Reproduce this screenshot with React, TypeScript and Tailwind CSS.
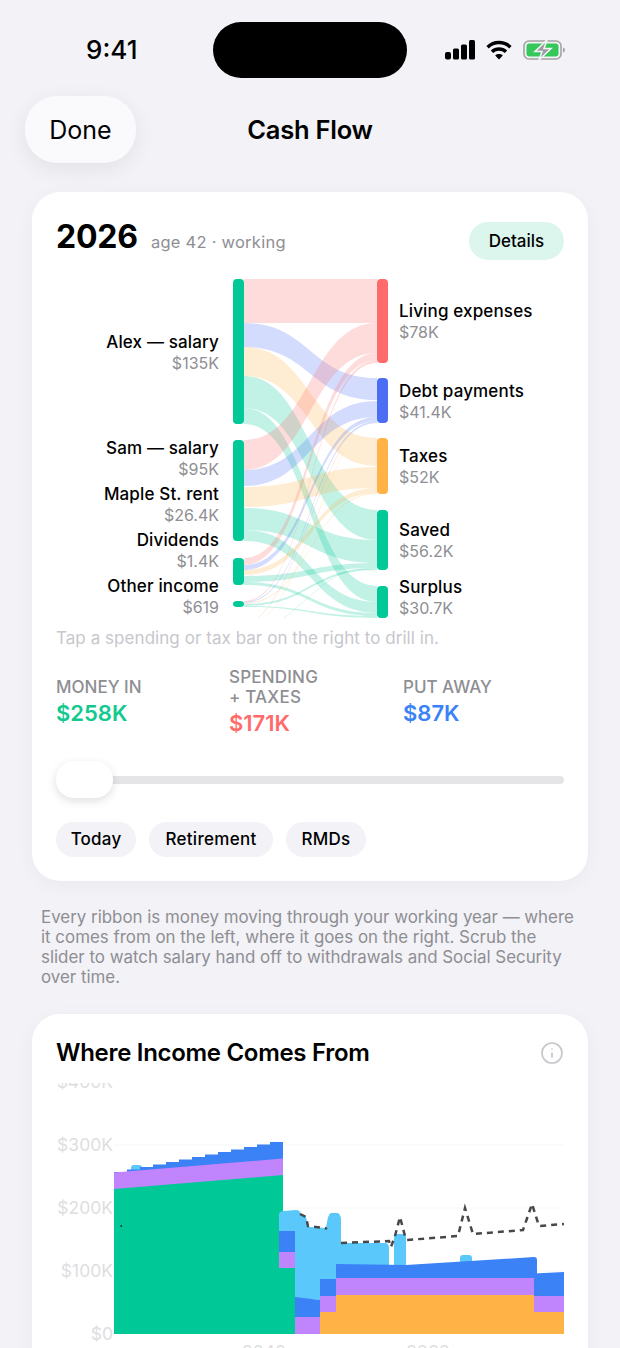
import { Info } from "lucide-react"

const PINK = "#ff6b6b"
const BLUE = "#4c6ef5"
const PEACH = "#ffb347"
const GREEN = "#00c896"

// left top, left bottom, right top, right bottom, colour
const flows: [number, number, number, number, string][] = [
  [279, 323, 279, 323, PINK],
  [323, 347, 378, 400, BLUE],
  [347, 376, 438, 466, PEACH],
  [376, 408, 510, 540, GREEN],
  [408, 424, 586, 602, GREEN],
  [440, 470, 323, 353, PINK],
  [470, 486, 401, 417, BLUE],
  [487, 507, 467, 488, PEACH],
  [508, 530, 540, 563, GREEN],
  [530, 541, 602, 613, GREEN],
  [558, 565, 353, 360, PINK],
  [565, 570, 417, 421, BLUE],
  [570, 575, 488, 493, PEACH],
  [576, 582, 563, 568, GREEN],
  [582, 585, 613, 616, GREEN],
  [601, 602, 360, 363, PINK],
  [602, 603, 421, 423, BLUE],
  [603, 604, 493, 494, PEACH],
  [604, 606, 568, 570, GREEN],
  [606, 607, 616, 618, GREEN],
]

const leftBars = [
  [279, 424],
  [440, 541],
  [558, 585],
  [601, 607],
]

const rightBars: [number, number, string][] = [
  [279, 363, PINK],
  [378, 423, BLUE],
  [438, 494, PEACH],
  [510, 570, GREEN],
  [586, 618, GREEN],
]

const leftLabels = [
  { name: "Alex — salary", value: "$135K", top: 61 },
  { name: "Sam — salary", value: "$95K", top: 167 },
  { name: "Maple St. rent", value: "$26.4K", top: 213 },
  { name: "Dividends", value: "$1.4K", top: 259 },
  { name: "Other income", value: "$619", top: 305 },
]

const rightLabels = [
  { name: "Living expenses", value: "$78K", top: 30 },
  { name: "Debt payments", value: "$41.4K", top: 110 },
  { name: "Taxes", value: "$52K", top: 175 },
  { name: "Saved", value: "$56.2K", top: 249 },
  { name: "Surplus", value: "$30.7K", top: 306 },
]

function ribbon(la: number, lb: number, ra: number, rb: number) {
  return `M244 ${la}C310 ${la} 310 ${ra} 377 ${ra}L377 ${rb}C310 ${rb} 310 ${lb} 244 ${lb}Z`
}

// the working years climb in yearly steps
function salaryTop() {
  let d = "M114 1172"
  for (let i = 0; i < 13; i++) {
    const x = 114 + i * 13
    const y = 1172 - i * 2.5
    d += `L${x} ${y}L${x + 13} ${y}`
  }
  return d + "L283 1139.500L283 1176L114 1189Z"
}

function StatusIcons() {
  return (
    <div className="flex items-center gap-[11px]">
      <svg width="30" height="20" viewBox="0 0 30 20" fill="#000">
        <rect x="0" y="12" width="6" height="7.5" rx="2" />
        <rect x="8" y="8.5" width="6" height="11" rx="1.5" />
        <rect x="16" y="4.5" width="6" height="15" rx="1.5" />
        <rect x="24" y="0" width="6" height="19.5" rx="1.5" />
      </svg>
      <svg width="26" height="20" viewBox="0 0 26 20" fill="none" stroke="#000" strokeWidth="3.4">
        <path d="M1.6 7.2C8 1 18 1 24.4 7.2" />
        <path d="M6 11.8C10 8 16 8 20 11.8" />
        <path d="M13 19.4L9.2 15.5C11.4 13.6 14.6 13.6 16.8 15.5Z" fill="#000" stroke="none" />
      </svg>
      <svg width="43" height="20" viewBox="0 0 43 20" fill="none">
        <rect x="1" y="1" width="37" height="18" rx="5" stroke="#a3a3a3" strokeWidth="1.6" />
        <rect x="3.5" y="3.5" width="32" height="13" rx="3" fill="#34c759" />
        <path d="M40 7.5C41.5 8 42 9 42 10C42 11 41.5 12 40 12.5Z" fill="#a3a3a3" />
        <path d="M24 0L12 11.5H19L16 20L28 8.500H21Z" fill="#9b9ba0" stroke="#f2f2f7" strokeWidth="1.6" />
      </svg>
    </div>
  )
}

function Sankey() {
  return (
    <div className="relative h-[350px]">
      <svg className="absolute inset-0" width="508" height="350" viewBox="56 270 508 350">
        {flows.map(([la, lb, ra, rb, color], i) => (
          <path key={i} d={ribbon(la, lb, ra, rb)} fill={color} fillOpacity={0.24} />
        ))}
        {/* faint hairlines running off the bottom of the diagram */}
        <path d="M258 618C290 590 305 520 340 450" fill="none" stroke={PINK} strokeOpacity="0.14" />
        <path d="M265 618C296 590 315 510 345 450" fill="none" stroke={PEACH} strokeOpacity="0.14" />
        <path d="M284 618C320 590 340 560 377 572" fill="none" stroke={GREEN} strokeOpacity="0.14" />
        {leftBars.map(([a, b]) => (
          <rect key={a} x="233" y={a} width="11" height={b - a} rx="4" fill={GREEN} />
        ))}
        {rightBars.map(([a, b, color]) => (
          <rect key={a} x="377" y={a} width="11" height={b - a} rx="4" fill={color} />
        ))}
      </svg>
      {leftLabels.map((l) => (
        <div key={l.name} className="absolute left-0 w-[163px] text-right" style={{ top: l.top }}>
          <div className="text-[17px] leading-[22px] tracking-[0.15px] font-medium text-black">{l.name}</div>
          <div className="text-[16px] leading-[21px] text-[#8e8e93]">{l.value}</div>
        </div>
      ))}
      {rightLabels.map((l) => (
        <div key={l.name} className="absolute left-[343px]" style={{ top: l.top }}>
          <div className="text-[17px] leading-[22px] tracking-[0.15px] font-medium text-black">{l.name}</div>
          <div className="text-[16px] leading-[21px] text-[#8e8e93]">{l.value}</div>
        </div>
      ))}
    </div>
  )
}

function IncomeChart() {
  const axis = [
    { label: "$400K", y: 1088 },
    { label: "$300K", y: 1151 },
    { label: "$200K", y: 1214 },
    { label: "$100K", y: 1277 },
    { label: "$0", y: 1340 },
  ]
  return (
    <svg className="block" width="556" height="265" viewBox="32 1083 556 265" fontFamily="Inter, sans-serif">
      {[1082, 1145, 1208, 1271].map((y) => (
        <line key={y} x1="114" x2="564" y1={y} y2={y} stroke="#f7f7f9" />
      ))}
      {axis.map((a) => (
        <text key={a.label} x="113" y={a.y} textAnchor="end" fontSize="17.5" fill="#dedee0">
          {a.label}
        </text>
      ))}
      <text x="264" y="1358" textAnchor="middle" fontSize="17.5" fill="#dedee0">2040</text>
      <text x="428" y="1358" textAnchor="middle" fontSize="17.5" fill="#dedee0">2060</text>

      {/* working years */}
      <rect x="131" y="1165" width="11" height="12" rx="3" fill="#5ac8fa" />
      <path d={salaryTop()} fill="#3b82f6" />
      <path d="M114 1172.500L283 1158.500L283 1176L114 1190Z" fill="#c084fc" />
      <path d="M114 1189L283 1175L283 1268L295 1268L295 1334L114 1334Z" fill={GREEN} />

      {/* light blue withdrawals */}
      <path d="M279 1232L279 1214Q280 1211 284 1211L296 1210Q300 1210 301 1214L306 1216Q307 1226 310 1227L326 1228Q328 1213 331 1213L338 1213Q340 1214 341 1218L341 1243L386 1243Q389 1244 389 1248L389 1266L336 1266L336 1280L320 1280L320 1300L295 1298L295 1232Z" fill="#5ac8fa" />
      <rect x="394" y="1234" width="12" height="36" rx="3" fill="#5ac8fa" />
      <rect x="460" y="1255" width="12" height="12" rx="3" fill="#5ac8fa" />

      {/* blue */}
      <rect x="279" y="1231" width="16" height="21" fill="#3b82f6" />
      <path d="M295 1297L320 1300L320 1317L295 1317Z" fill="#3b82f6" />
      <rect x="320" y="1279" width="16" height="17" fill="#3b82f6" />
      <path d="M336 1264L406 1265L534 1257Q537 1257 537 1260L537 1278L336 1278Z" fill="#3b82f6" />
      <path d="M534 1273.500L564 1272L564 1296L534 1296Z" fill="#3b82f6" />

      {/* purple */}
      <rect x="279" y="1252" width="16" height="16" fill="#c084fc" />
      <rect x="295" y="1317" width="25" height="17" fill="#c084fc" />
      <rect x="320" y="1296" width="16" height="16" fill="#c084fc" />
      <rect x="336" y="1278" width="198" height="17" fill="#c084fc" />
      <rect x="534" y="1296" width="30" height="16" fill="#c084fc" />

      {/* orange */}
      <rect x="320" y="1312" width="16" height="22" fill={PEACH} />
      <rect x="336" y="1295" width="198" height="39" fill={PEACH} />
      <rect x="534" y="1312" width="30" height="22" fill={PEACH} />

      <rect x="120.500" y="1225" width="1.500" height="2" fill="#333" />
      <path
        d="M300 1214L306 1217L308 1226L325 1228L327 1229M341 1243L389 1241L391 1247L395 1236L400 1217L405 1236L407 1240L458 1236L465 1208L473 1234L523 1230L532 1204L539 1226L564 1224"
        fill="none"
        stroke="#48484a"
        strokeWidth="2.5"
        strokeDasharray="6 5"
      />
    </svg>
  )
}

export default function App() {
  return (
    <div className="w-[620px] h-[1348px] overflow-hidden bg-[#f2f2f7] text-black font-['Inter',sans-serif]">
      {/* Status bar */}
      <div className="flex items-center h-[56px] mt-[22px] pl-[86px]">
        <span className="w-[54px] text-[26px] leading-none font-medium">9:41</span>
        <div className="w-[194px] h-[56px] ml-[73px] rounded-full bg-black" />
        <div className="ml-[38px]">
          <StatusIcons />
        </div>
      </div>

      {/* Nav */}
      <div className="relative flex justify-center items-center h-[67px] mt-[18px]">
        <button className="absolute left-[25px] top-0 w-[111px] h-[67px] pt-[2px] rounded-[32px] bg-[#fafafd] shadow-[0_6px_22px_rgba(0,0,0,0.07)] text-[25px] text-black">
          Done
        </button>
        <h1 className="pt-[2px] text-[25.500px] font-semibold tracking-[-0.25px]">Cash Flow</h1>
      </div>

      {/* Year card */}
      <div className="mx-[32px] mt-[29px] h-[689px] rounded-[28px] bg-white px-[24px] pt-[30px] shadow-[0_4px_20px_rgba(0,0,0,0.04)]">
        <div className="flex items-center justify-between h-[38px]">
          <div className="flex items-baseline gap-[13px] mb-[9px]">
            <span className="text-[32px] leading-[38px] font-bold tracking-[-0.2px]">2026</span>
            <span className="text-[16.500px] tracking-[0.25px] text-[#8e8e93]">age 42 · working</span>
          </div>
          <button className="w-[95px] h-[38px] pt-[2px] rounded-full bg-[#dcf6ee] text-[17px] font-medium">
            Details
          </button>
        </div>

        <div className="mt-[10px]">
          <Sankey />
        </div>

        <p className="mt-[8px] text-[17px] leading-[20px] text-[#c7c7cc] tracking-[0.05px]">
          Tap a spending or tax bar on the right to drill in.
        </p>

        <div className="grid grid-cols-[173px_174px_1fr] items-center mt-[15px] h-[78px]">
          <div>
            <div className="text-[17px] leading-[20px] font-medium text-[#8e8e93]">MONEY IN</div>
            <div className="mt-[2px] text-[22px] leading-[28px] font-semibold text-[#14c98f]">$258K</div>
          </div>
          <div>
            <div className="text-[17px] leading-[20px] tracking-[0.2px] font-medium text-[#8e8e93]">
              SPENDING
              <br />+ TAXES
            </div>
            <div className="mt-[2px] text-[22px] leading-[28px] font-semibold text-[#ff6b6b]">$171K</div>
          </div>
          <div>
            <div className="text-[17px] leading-[20px] font-medium text-[#8e8e93]">PUT AWAY</div>
            <div className="mt-[2px] text-[22px] leading-[28px] font-semibold text-[#3b82f6]">$87K</div>
          </div>
        </div>

        {/* Slider */}
        <div className="relative flex items-center h-[37px] mt-[20px]">
          <div className="w-full h-[8px] rounded-full bg-[#e5e5e7]" />
          <div className="absolute left-0 top-0 w-[57px] h-[37px] rounded-[18px] bg-white shadow-[0_3px_10px_rgba(0,0,0,0.13)]" />
        </div>

        <div className="flex gap-[13px] mt-[24px]">
          <span className="flex items-center justify-center w-[80px] h-[35px] rounded-full bg-[#f2f2f7] text-[17px] tracking-[0.2px] font-medium">Today</span>
          <span className="flex items-center justify-center w-[124px] h-[35px] rounded-full bg-[#f2f2f7] text-[17px] tracking-[0.3px] font-medium">Retirement</span>
          <span className="flex items-center justify-center w-[80px] h-[35px] rounded-full bg-[#f2f2f7] text-[17px] tracking-[0.2px] font-medium">RMDs</span>
        </div>
      </div>

      <p className="mx-[41px] mt-[26px] text-[16.900px] leading-[20px] text-[#8e8e93]">
        Every ribbon is money moving through your working year — where it comes from on the left, where it goes on the right. Scrub the slider to watch salary hand off to withdrawals and Social Security over time.
      </p>

      {/* Income card */}
      <div className="mx-[32px] mt-[27px] h-[400px] rounded-[28px] bg-white shadow-[0_4px_20px_rgba(0,0,0,0.04)]">
        <div className="flex items-center justify-between h-[69px] pt-[8px] pl-[24px] pr-[24px]">
          <h2 className="text-[24px] font-semibold tracking-[-0.3px]">Where Income Comes From</h2>
          <Info size={24} strokeWidth={1.7} className="text-[#c7c7cc]" />
        </div>
        <IncomeChart />
      </div>
    </div>
  )
}
